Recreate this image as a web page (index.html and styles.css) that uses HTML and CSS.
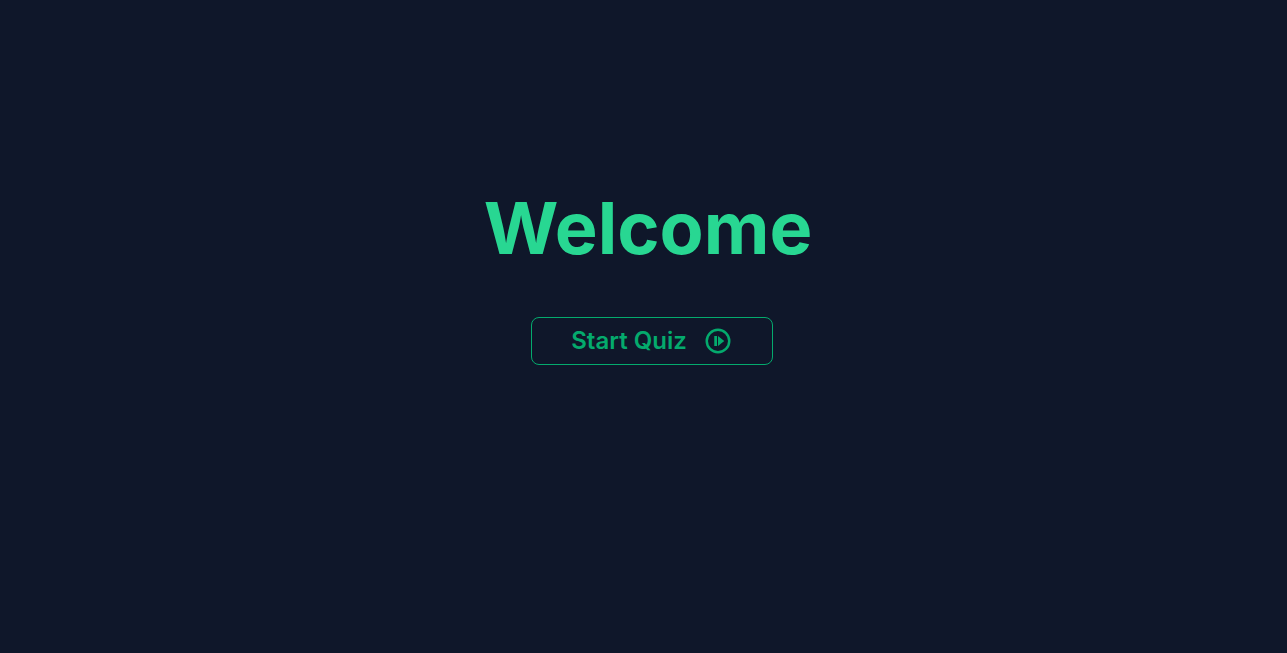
FILE: index.html
```html
<!DOCTYPE html>
<html lang="en">
<head>
  <meta charset="UTF-8">
  <meta name="viewport" content="width=device-width, initial-scale=1.0">
  <title>Quiz</title>
  <link rel="stylesheet" href="styles.css">
</head>
<body>
  <main class="welcome">
    <h1 class="welcome-title">Welcome</h1>
    <button type="button" class="start-btn">
      Start Quiz
      <svg class="start-icon" viewBox="0 0 24 24" fill="currentColor" aria-hidden="true">
        <circle cx="12" cy="12" r="9" fill="none" stroke="currentColor" stroke-width="2"/>
        <path d="M9 8h2.2v8H9zM12 8v8l5-4z"/>
      </svg>
    </button>
  </main>
</body>
</html>
```

FILE: styles.css
```css
body {
  margin: 0;
  background: #0f172a;
  font-family: Inter, sans-serif;
}

.welcome {
  display: flex;
  flex-direction: column;
  align-items: center;
  padding: 192px 0 0 17px;
}

.welcome-title {
  margin: 0 8px 53px 0;
  font-size: 72px;
  line-height: 72px;
  font-weight: 700;
  color: #28d792;
}

.start-btn {
  display: flex;
  align-items: center;
  gap: 16px;
  height: 48px;
  padding: 0 39px;
  border: 1px solid #04aa6d;
  border-radius: 8px;
  background: transparent;
  color: #04aa6d;
  font-family: inherit;
  font-size: 24px;
  line-height: 32px;
  font-weight: 600;
  cursor: pointer;
}

.start-btn:hover {
  background: rgba(4, 170, 109, 0.1);
}

.start-icon {
  width: 30px;
  height: 30px;
}
```
